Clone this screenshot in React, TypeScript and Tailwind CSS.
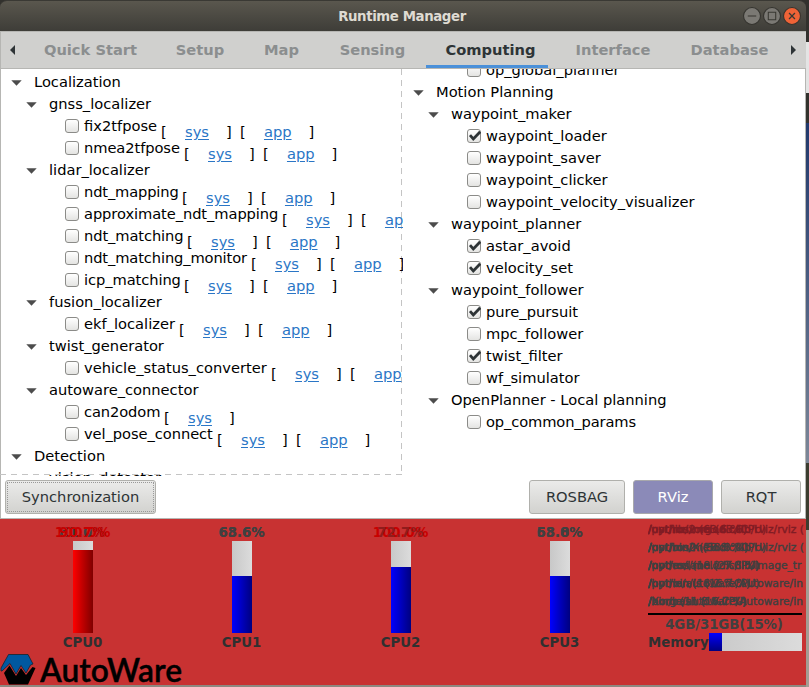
type Row = {
  level: 0 | 1 | 2
  label: string
  checked?: boolean
  links?: string[]
  width?: string
}

const both = ['sys', 'app']

const leftRows: Row[] = [
  { level: 0, label: 'Localization' },
  { level: 1, label: 'gnss_localizer' },
  { level: 2, label: 'fix2tfpose', links: both, width: 'w-[74px]' },
  { level: 2, label: 'nmea2tfpose', links: both, width: 'w-[97px] tracking-[-0.08px]' },
  { level: 1, label: 'lidar_localizer' },
  { level: 2, label: 'ndt_mapping', links: both, width: 'w-[95px] tracking-[-0.15px]' },
  { level: 2, label: 'approximate_ndt_mapping', links: both, width: 'w-[195px] tracking-[-0.08px]' },
  { level: 2, label: 'ndt_matching', links: both, width: 'w-[100px] tracking-[-0.1px]' },
  { level: 2, label: 'ndt_matching_monitor', links: both, width: 'w-[164px] tracking-[-0.12px]' },
  { level: 2, label: 'icp_matching', links: both, width: 'w-[97px] tracking-[-0.08px]' },
  { level: 1, label: 'fusion_localizer' },
  { level: 2, label: 'ekf_localizer', links: both, width: 'w-[92px]' },
  { level: 1, label: 'twist_generator' },
  { level: 2, label: 'vehicle_status_converter', links: both, width: 'w-[184px]' },
  { level: 1, label: 'autoware_connector' },
  { level: 2, label: 'can2odom', links: ['sys'], width: 'w-[77px] tracking-[-0.1px]' },
  { level: 2, label: 'vel_pose_connect', links: both, width: 'w-[130px] tracking-[-0.06px]' },
  { level: 0, label: 'Detection' },
  { level: 1, label: 'vision_detector' },
]

const rightRows: Row[] = [
  { level: 2, label: 'op_global_planner' },
  { level: 0, label: 'Motion Planning' },
  { level: 1, label: 'waypoint_maker' },
  { level: 2, label: 'waypoint_loader', checked: true },
  { level: 2, label: 'waypoint_saver' },
  { level: 2, label: 'waypoint_clicker' },
  { level: 2, label: 'waypoint_velocity_visualizer' },
  { level: 1, label: 'waypoint_planner' },
  { level: 2, label: 'astar_avoid', checked: true },
  { level: 2, label: 'velocity_set', checked: true },
  { level: 1, label: 'waypoint_follower' },
  { level: 2, label: 'pure_pursuit', checked: true },
  { level: 2, label: 'mpc_follower' },
  { level: 2, label: 'twist_filter', checked: true },
  { level: 2, label: 'wf_simulator' },
  { level: 1, label: 'OpenPlanner - Local planning' },
  { level: 2, label: 'op_common_params', width: 'tracking-[-0.12px]' },
]

const tabs = [
  { name: 'Quick Start', width: 'w-[131px]' },
  { name: 'Setup', width: 'w-[88px]' },
  { name: 'Map', width: 'w-[75px]' },
  { name: 'Sensing', width: 'w-[107px]' },
  { name: 'Computing', width: 'w-[122px]' },
  { name: 'Interface', width: 'w-[130px]' },
  { name: 'Database', width: 'w-[103px]' },
]

const cpus = [
  { name: 'CPU0', values: ['100.0%', '81.0%', '90.7%'], hot: true, fill: 83 },
  { name: 'CPU1', values: ['63.6%', '68.6%'], hot: false, fill: 57 },
  { name: 'CPU2', values: ['100.0%', '72.7%'], hot: true, fill: 66 },
  { name: 'CPU3', values: ['58.8%', '63.0%'], hot: false, fill: 57 },
]

const processes = [
  ['/opt/ros/melodic/lib/rviz/rviz (', '/python2 (63.6 %CPU)', '/usr/lib/xorg (63.6)'],
  ['/opt/ros/melodic/lib/rviz/rviz (', '/python2 (18.8 %CPU)', '/usr/bin/X (58.3 %)'],
  ['/opt/ros/melodic/lib/image_tr', '/python (18.2 %CPU)', '/nodes/lane (27.3 %)'],
  ['/home/autoware/Autoware/in', '/python (18.2 %CPU)', '/opt/bin/ls (16.7 %)'],
  ['/home/autoware/Autoware/in', '/Xorg (11.8 %CPU)', '/bin/bash (16.7 %)'],
]

function Checkbox({ checked }: { checked?: boolean }) {
  return (
    <span className="relative size-[14px] shrink-0 rounded-[3px] border border-[#8b8b88] bg-gradient-to-b from-white to-[#e4e4e2]">
      {checked && (
        <svg viewBox="0 0 14 14" className="absolute -left-px -top-px size-[14px]">
          <path d="M3 6.2 L6.3 10 L13.2 2.8" fill="none" stroke="#2e3436" strokeWidth="2.8" />
        </svg>
      )}
    </span>
  )
}

function TreeRow({ row }: { row: Row }) {
  if (row.level < 2) {
    return (
      <div className={`flex h-[22px] items-center ${row.level === 0 ? 'pl-[11px]' : 'pl-[26px]'}`}>
        <svg viewBox="0 0 11 6" className="mr-[12px] mt-px h-[6px] w-[11px] shrink-0">
          <path d="M0.3 0.3H10.7L5.5 5.8Z" fill="#4c4c4c" />
        </svg>
        <span>{row.label}</span>
      </div>
    )
  }
  return (
    <div className="flex h-[22px] items-center whitespace-pre pl-[65px]">
      <Checkbox checked={row.checked} />
      <span className={`ml-[5px] mr-[3px] shrink-0 ${row.width ?? ''}`}>{row.label}</span>
      {row.links?.map(link => (
        <span key={link} className="mr-[8px] flex pt-[12px]">
          <span className="w-[6px]">[</span>
          <span className="ml-[18px] mr-[17px] text-[#2a76c6] underline underline-offset-2">{link}</span>
          <span className="w-[6px]">]</span>
        </span>
      ))}
    </div>
  )
}

function Cpu({ cpu }: { cpu: (typeof cpus)[number] }) {
  return (
    <div className="flex w-[159px] flex-col items-center">
      <div className="grid h-[18px] justify-items-center pt-px leading-[18px]">
        {cpu.values.map(v => (
          <span key={v} className={`[grid-area:1/1] ${cpu.hot && v !== '81.0%' ? (v === '72.7%' ? 'text-[#901c1c]' : 'text-[#c80000]') : 'text-[#404040]'}`}>{v}</span>
        ))}
      </div>
      <div className="flex h-[92px] w-[20px] flex-col justify-end bg-gradient-to-r from-[#c8c8c8] to-[#dcdcdc]">
        <div
          className={`bg-gradient-to-r ${cpu.name === 'CPU0' ? 'from-[#ff0000] to-[#800000]' : 'from-[#0000ff] to-[#000080]'}`}
          style={{ height: cpu.fill }}
        />
      </div>
      <span className="pt-px leading-[18px] text-[#303030]">{cpu.name}</span>
    </div>
  )
}

function Logo() {
  return (
    <div className="flex h-[32px] items-center">
      <svg viewBox="0 0 36 31" className="h-[31px] w-[36px]">
        <path d="M1 17 V14 L8.5 0.5 H28 L33 10 L30.5 11 L26 19 L21 11.5 L16 20 L10 9.5 L2 17Z" fill="#0058a0" stroke="#17232d" strokeWidth="0.8" />
        <path d="M4 19 L9.5 11.5 L16 22 L21 14 L26 21 L32.5 13 L35.5 14 L28 30.5 H9Z" fill="#000" />
      </svg>
      <svg viewBox="0 0 142 32" className="ml-[4px] h-[32px] w-[142px]">
        <text x="0" y="29" textLength="142" lengthAdjust="spacingAndGlyphs" className="fill-black stroke-black stroke-[0.4px] font-['Lato',sans-serif] text-[33px] font-semibold">AutoWare</text>
      </svg>
    </div>
  )
}

const buttonClass = 'flex h-[34px] items-center justify-center rounded-[3px] border border-[#b0b0ac] bg-gradient-to-b from-[#ebebea] to-[#d2d2cf] text-[#2e3436]'

export default function App() {
  return (
    <div className="flex h-[687px] w-[809px] overflow-hidden bg-[#32312d] font-['DejaVu_Sans',sans-serif] text-[14.67px] leading-[22px] text-black">
      <div className="flex w-[806px] shrink-0 flex-col">
        <header className="flex h-[31px] items-center rounded-t-[7px] border-t border-[#3a3934] bg-gradient-to-b from-[#5a574e] to-[#3e3d38]">
          <h1 className="ml-[61px] flex-1 pt-px text-center text-[13.33px] font-bold tracking-[-0.4px] text-[#dfdbd2]">Runtime Manager</h1>
          <div className="mr-[5px] flex gap-[2px]">
            {['min', 'max', 'close'].map(b => (
              <svg key={b} viewBox="0 0 17 17" className="size-[18px]">
                <circle cx="8.5" cy="8.5" r="8" fill={b === 'close' ? '#ef6337' : '#7b7974'} stroke="#34332e" />
                {b === 'min' && <path d="M4.5 8.5H12.5" stroke="#393832" />}
                {b === 'max' && <path d="M5 5H12V12H5Z" fill="none" stroke="#393832" />}
                {b === 'close' && <path d="M5.7 5.7L11.3 11.3M11.3 5.7L5.7 11.3" stroke="#393832" strokeWidth="1.2" />}
              </svg>
            ))}
          </div>
        </header>

        <nav className="flex h-[38px] items-center border-b border-l border-t border-[#b6b6b3] bg-[#d0d0ce] text-[14.67px] font-bold text-[#8b8e8f]">
          <svg viewBox="0 0 5 10" className="ml-[9px] mr-[10px] h-[10px] w-[5px]">
            <path d="M5 0V10L0 5Z" fill="#2e3436" />
          </svg>
          {tabs.map(tab => (
            <span
              key={tab.name}
              className={`flex h-full shrink-0 items-center justify-center whitespace-nowrap ${tab.width} ${tab.name === 'Computing' ? 'border-b-[3px] border-[#4a90d9] pl-[7px] pt-[3px] text-[#2e3436]' : ''}`}
            >
              {tab.name}
            </span>
          ))}
          <svg viewBox="0 0 5 10" className="ml-auto mr-[10px] h-[10px] w-[5px]">
            <path d="M0 0V10L5 5Z" fill="#2e3436" />
          </svg>
        </nav>

        <main className="flex h-[407px] border-l border-r border-[#b6b6b3] bg-white">
          <div className="-ml-px flex w-[403px] shrink-0 flex-col overflow-hidden bg-[repeating-linear-gradient(180deg,#c4c4c4_0_6px,transparent_6px_11px),repeating-linear-gradient(90deg,#c4c4c4_0_6px,transparent_6px_11px)] bg-[length:1px_406px,402px_1px] bg-[position:401px_0,0_405px] bg-no-repeat pt-[2px]">
            {leftRows.map(row => <TreeRow key={row.label} row={row} />)}
          </div>
          <div className="-ml-px flex-1 overflow-hidden">
            <div className="-mt-[10px]">
              {rightRows.map(row => <TreeRow key={row.label} row={row} />)}
            </div>
          </div>
        </main>

        <div className="flex h-[43px] items-center border-b border-l border-r border-[#b6b6b3] bg-white pl-[4px] pr-[4px]">
          <button className={`${buttonClass} w-[151px] outline outline-1 -outline-offset-[3px] outline-dotted outline-[#999]`}>Synchronization</button>
          <button className={`${buttonClass} ml-auto w-[96px]`}>ROSBAG</button>
          <button className="ml-[8px] flex h-[34px] w-[80px] items-center justify-center rounded-[3px] border border-[#a8a8ac] bg-[#8b8ab8] text-white">RViz</button>
          <button className={`${buttonClass} ml-[8px] w-[80px]`}>RQT</button>
        </div>

        <footer className="flex h-[166px] flex-col bg-[#c83232] pt-[4px] text-[13.33px] font-bold">
          <div className="flex h-[132px] pl-[3px]">
            {cpus.map(cpu => <Cpu key={cpu.name} cpu={cpu} />)}
            <div className="-mt-[3px] ml-[9px] w-[158px]">
              {processes.map((lines, i) => (
                <div key={i} className="grid h-[18px] overflow-hidden whitespace-nowrap pt-px text-[10.67px] font-normal leading-[18px]">
                  {lines.map(line => (
                    <span key={line} className={`[grid-area:1/1] [-webkit-text-stroke:0.4px_currentColor] ${i === 0 ? 'text-[#801c24]' : 'text-[#404040]'}`}>{line}</span>
                  ))}
                </div>
              ))}
              <div className="mr-[4px] mt-[3px] h-[2px] bg-black" />
              <p className="mr-[6px] h-[18px] pt-px text-center leading-[18px] tracking-[-0.1px] text-[#404040]">4GB/31GB(15%)</p>
              <div className="mr-[4px] flex h-[18px]">
                <span className="w-[61px] pt-px leading-[18px] text-[#303030]">Memory</span>
                <div className="h-full flex-1 bg-gradient-to-r from-[#c8c8c8] to-[#dcdcdc]">
                  <div className="h-full w-[13px] bg-gradient-to-b from-[#0000ff] to-[#000080]" />
                </div>
              </div>
            </div>
          </div>
          <Logo />
        </footer>
        <div className="h-[2px] bg-[#8d8980]" />
      </div>

      {/* desktop showing past the window edge */}
      <div className="flex flex-1 flex-col">
        <div className="h-[42px] bg-[#32312d]" />
        <div className="h-[51px] bg-[#e4e4e4]" />
        <div className="h-[30px] bg-[#33322d]" />
        <div className="h-[340px] bg-gradient-to-b from-[#21386c] to-[#7d8798]" />
        <div className="h-[67px] bg-[#3c3d2f]" />
        <div className="flex-1 bg-[#a39d93]" />
      </div>
    </div>
  )
}
